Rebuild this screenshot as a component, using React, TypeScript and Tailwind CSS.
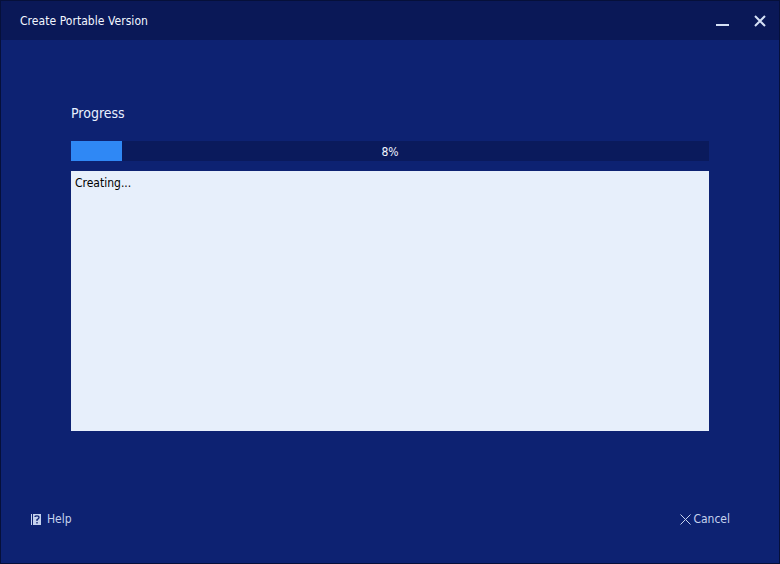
export default function App() {
  return (
    <div className="w-[780px] h-[564px] flex flex-col bg-[#0d2272] border border-[#06103a] font-['DejaVu_Sans_Condensed','DejaVu_Sans',sans-serif] overflow-hidden">
      {/* Title bar */}
      <div className="h-[39px] shrink-0 flex items-center justify-between bg-[#0a1857] pl-[19px] pr-[12px]">
        <span className="text-[12px] tracking-[0.05px] text-[#f2f6ff]">Create Portable Version</span>
        <div className="flex items-center gap-[23px]">
          <svg width="14" height="14" viewBox="0 0 14 14" className="mt-[2px]">
            <rect x="0" y="9" width="13" height="2" fill="#d5e0f5" />
          </svg>
          <svg width="14" height="14" viewBox="0 0 14 14">
            <path d="M2 2 L12 12 M12 2 L2 12" stroke="#d5e0f5" strokeWidth="2" fill="none" />
          </svg>
        </div>
      </div>

      {/* Body */}
      <div className="flex-1 flex flex-col px-[70px] pt-[63px]">
        <div className="text-[14px] leading-[20px] text-[#e8f0ff]">Progress</div>
        <div className="relative mt-[18px] h-[20px] bg-[#0a1a5c]">
          <div className="h-full w-[51px] bg-[#2f88f5]" />
          <span className="absolute inset-0 flex items-center justify-center pt-[2px] text-[12px] text-[#f2f6ff]">8%</span>
        </div>
        <div className="mt-[10px] h-[260px] bg-[#e7effb] px-[4px] py-[4px] text-[12px] leading-[16px] text-black">Creating...</div>
      </div>

      {/* Footer */}
      <div className="h-[52px] shrink-0 flex items-start justify-between pl-[30px] pr-[49px]">
        <div className="flex items-center gap-[6px] text-[12px] leading-[16px] text-[#c5d2ee]">
          <svg width="10" height="11" viewBox="0 0 10 11">
            <rect x="0" y="0" width="1" height="11" fill="#c5d2ee" />
            <rect x="2" y="0" width="8" height="11" fill="#c5d2ee" />
            <path d="M4 3 Q4 1.8 6 1.8 Q8 1.8 8 3.4 Q8 4.6 6 5.6 V7 M6 8 V9.6" stroke="#0d2272" strokeWidth="1.3" fill="none" />
          </svg>
          <span>Help</span>
        </div>
        <div className="flex items-center gap-[2px] text-[12px] leading-[16px] text-[#c5d2ee]">
          <svg width="11" height="11" viewBox="0 0 11 11">
            <path d="M0.5 0.5 L10.5 10.5 M10.5 0.5 L0.5 10.5" stroke="#c5d2ee" strokeWidth="1" fill="none" />
          </svg>
          <span>Cancel</span>
        </div>
      </div>
    </div>
  )
}
